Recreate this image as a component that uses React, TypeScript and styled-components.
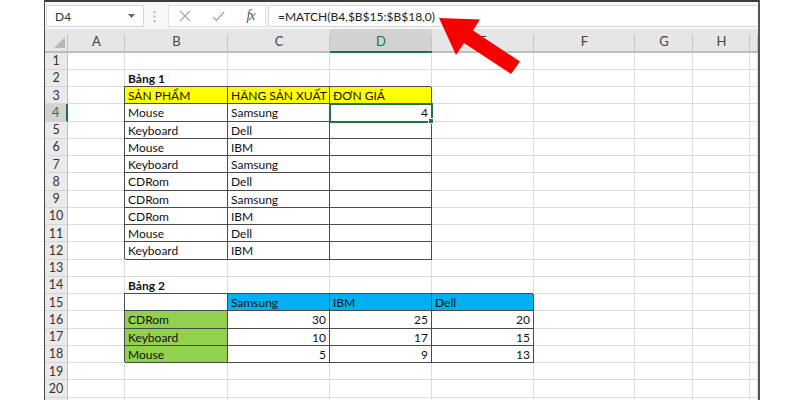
import React from 'react';
import styled, { createGlobalStyle } from 'styled-components';

const GlobalStyle = createGlobalStyle`
  html, body { margin: 0; padding: 0; background: #fff; }
  body { font-family: Lato, "Liberation Sans", sans-serif; }
`;

const GREEN = '#217346';
const BOX = '#4a4a4a';
const GRID = '#dcdcdc';

const Page = styled.div`
  position: relative;
  width: 800px;
  height: 400px;
  overflow: hidden;
  background: #fff;
`;

const Frame = styled.div`
  box-sizing: border-box;
  margin-left: 44px;
  width: 716px;
  height: 400px;
  border-top: 2px solid #3c3c3c;
  border-left: 1px solid #474747;
  border-right: 2px solid #555;
  overflow: hidden;
  display: flex;
  flex-direction: column;
  background: #fff;
`;

const FormulaBar = styled.div`
  box-sizing: border-box;
  display: flex;
  align-items: stretch;
  height: 27px;
  flex: none;
  padding: 3px 1px 2px 1px;
  background: #f7f7f7;
`;

const NameBox = styled.div`
  box-sizing: border-box;
  width: 98px;
  display: flex;
  align-items: center;
  justify-content: space-between;
  padding: 0 8px 0 8px;
  background: #fff;
  border: 1px solid #d6d6d6;
  font-size: 12px;
  color: #333;
`;

const Separator = styled.div`
  width: 24px;
  display: flex;
  align-items: center;
  justify-content: center;
  padding-right: 4px;
  box-sizing: border-box;
`;

const FuncBox = styled.div`
  box-sizing: border-box;
  width: 98px;
  display: flex;
  align-items: center;
  justify-content: space-around;
  background: #fff;
  border: 1px solid #e0e0e0;
`;

const Fx = styled.span`
  font-family: "Liberation Serif", serif;
  font-style: italic;
  font-size: 14px;
  color: #555;
  letter-spacing: -1px;
`;

const FormulaBox = styled.div`
  box-sizing: border-box;
  flex: 1;
  margin-left: 2px;
  display: flex;
  align-items: center;
  padding-left: 9px;
  background: #fff;
  border: 1px solid #d6d6d6;
  border-right: none;
  font-size: 12px;
  color: #222;
`;

const Sheet = styled.div`
  display: grid;
  grid-template-columns: 23px 57px 103px 102px 102px 102px 101px 58px 57px 1fr;
  grid-template-rows: 23.5px;
  grid-auto-rows: 17.25px;
`;

const Corner = styled.div`
  position: relative;
  box-sizing: border-box;
  background: #e6e6e6;
  border-bottom: 2px solid #bdbdbd;
  display: flex;
  align-items: flex-end;
  justify-content: flex-end;
  padding: 0 3px 3px 0;
  &::after {
    content: '';
    position: absolute;
    right: 0;
    top: 6px;
    bottom: 0;
    width: 1px;
    background: #c4c4c4;
  }
`;

const ColHeader = styled.div<{ $active?: boolean }>`
  position: relative;
  box-sizing: border-box;
  display: flex;
  align-items: center;
  justify-content: center;
  background: ${p => (p.$active ? '#d2d2d2' : '#e6e6e6')};
  border-bottom: 2px solid ${p => (p.$active ? GREEN : '#bdbdbd')};
  color: ${p => (p.$active ? GREEN : '#444')};
  font-size: 13px;
  padding-top: 3px;
  &::after {
    content: '';
    position: absolute;
    right: 0;
    top: 6px;
    bottom: 0;
    width: 1px;
    background: #c4c4c4;
  }
`;

const RowHeader = styled.div<{ $active?: boolean }>`
  box-sizing: border-box;
  display: flex;
  align-items: center;
  justify-content: center;
  background: ${p => (p.$active ? '#d2d2d2' : '#eaeaea')};
  border-bottom: 1px solid #d6d6d6;
  border-right: ${p => (p.$active ? `2px solid ${GREEN}` : '1px solid #bdbdbd')};
  color: ${p => (p.$active ? GREEN : '#333')};
  font-size: 12.5px;
`;

const Cell = styled.div<{ $bg?: string; $bold?: boolean; $right?: boolean; $boxed?: boolean; $active?: boolean }>`
  position: relative;
  z-index: ${p => (p.$active ? 2 : 'auto')};
  box-sizing: border-box;
  padding: 0 3px;
  background: ${p => p.$bg || '#fff'};
  border-right: 1px solid ${p => (p.$boxed ? BOX : GRID)};
  border-bottom: 1px solid ${p => (p.$boxed ? BOX : GRID)};
  box-shadow: ${p => (p.$boxed ? `-1px -1px 0 0 ${BOX}` : 'none')};
  outline: ${p => (p.$active ? `2px solid ${GREEN}` : 'none')};
  outline-offset: -1px;
  font-size: 12px;
  line-height: 17px;
  font-weight: ${p => (p.$bold ? 700 : 400)};
  text-align: ${p => (p.$right ? 'right' : 'left')};
  color: #111;
  white-space: nowrap;
  &::after {
    content: '';
    display: ${p => (p.$active ? 'block' : 'none')};
    position: absolute;
    right: -3px;
    bottom: -3px;
    width: 4px;
    height: 4px;
    background: ${GREEN};
    border: 1px solid #fff;
  }
`;

const ArrowSvg = styled.svg`
  position: absolute;
  left: 430px;
  top: 4px;
`;

type Spec = { t?: string; bold?: boolean; bg?: string; right?: boolean; boxed?: boolean };

const COLS = ['A', 'B', 'C', 'D', 'E', 'F', 'G', 'H', 'I'];
const ROWS = Array.from({ length: 20 }, (_, i) => i + 1);

const buildData = () => {
  const d: Record<string, Spec> = {};
  const set = (k: string, s: Spec) => {
    d[k] = { ...(d[k] || {}), ...s };
  };
  const box = (c1: string, r1: number, c2: string, r2: number) => {
    for (let c = COLS.indexOf(c1); c <= COLS.indexOf(c2); c++)
      for (let r = r1; r <= r2; r++) set(COLS[c] + r, { boxed: true });
  };
  set('B2', { t: 'Bảng 1', bold: true });
  set('B3', { t: 'SẢN PHẨM', bg: '#ffff00' });
  set('C3', { t: 'HÃNG SẢN XUẤT', bg: '#ffff00' });
  set('D3', { t: 'ĐƠN GIÁ', bg: '#ffff00' });
  const list: [string, string][] = [
    ['Mouse', 'Samsung'],
    ['Keyboard', 'Dell'],
    ['Mouse', 'IBM'],
    ['Keyboard', 'Samsung'],
    ['CDRom', 'Dell'],
    ['CDRom', 'Samsung'],
    ['CDRom', 'IBM'],
    ['Mouse', 'Dell'],
    ['Keyboard', 'IBM'],
  ];
  list.forEach(([p, h], i) => {
    set('B' + (4 + i), { t: p });
    set('C' + (4 + i), { t: h });
  });
  set('D4', { t: '4', right: true });
  box('B', 3, 'D', 12);

  set('B14', { t: 'Bảng 2', bold: true });
  set('C15', { t: 'Samsung', bg: '#00b0f0' });
  set('D15', { t: 'IBM', bg: '#00b0f0' });
  set('E15', { t: 'Dell', bg: '#00b0f0' });
  const t2: [string, number[]][] = [
    ['CDRom', [30, 25, 20]],
    ['Keyboard', [10, 17, 15]],
    ['Mouse', [5, 9, 13]],
  ];
  t2.forEach(([p, v], i) => {
    const r = 16 + i;
    set('B' + r, { t: p, bg: '#92d050' });
    set('C' + r, { t: String(v[0]), right: true });
    set('D' + r, { t: String(v[1]), right: true });
    set('E' + r, { t: String(v[2]), right: true });
  });
  box('B', 15, 'E', 18);
  return d;
};

const DATA = buildData();
const ACTIVE = 'D4';

const DropArrow = () => (
  <svg width="7" height="4" viewBox="0 0 7 4">
    <path d="M0 0 L7 0 L3.5 4 Z" fill="#666" />
  </svg>
);

const Dots = () => (
  <svg width="3" height="13" viewBox="0 0 3 13">
    <rect x="0.5" y="1" width="2" height="2" fill="#b4b4b4" />
    <rect x="0.5" y="5.5" width="2" height="2" fill="#b4b4b4" />
    <rect x="0.5" y="10" width="2" height="2" fill="#b4b4b4" />
  </svg>
);

const CancelIcon = () => (
  <svg width="12" height="12" viewBox="0 0 12 12">
    <path d="M1 1 L11 11 M11 1 L1 11" stroke="#a8a8a8" strokeWidth="1.2" fill="none" />
  </svg>
);

const EnterIcon = () => (
  <svg width="13" height="11" viewBox="0 0 13 11">
    <path d="M1 6 L4.5 9.5 L12 1" stroke="#a8a8a8" strokeWidth="1.2" fill="none" />
  </svg>
);

const CornerTriangle = () => (
  <svg width="11" height="11" viewBox="0 0 11 11">
    <path d="M11 0 L11 11 L0 11 Z" fill="#b8b8b8" />
  </svg>
);

const RedArrow = () => {
  const pts: [number, number][] = [
    [439, 18],
    [480, 19.5],
    [473, 30.5],
    [520, 61.5],
    [511, 74],
    [464, 43],
    [456, 55],
  ];
  const d = pts.map(([x, y]) => `${x - 430},${y - 4}`).join(' ');
  return (
    <ArrowSvg width="100" height="80" viewBox="0 0 100 80">
      <polygon points={d} fill="#f70000" />
    </ArrowSvg>
  );
};

export default function App() {
  return (
    <>
      <GlobalStyle />
      <Page>
        <Frame>
          <FormulaBar>
            <NameBox>
              <span>D4</span>
              <DropArrow />
            </NameBox>
            <Separator>
              <Dots />
            </Separator>
            <FuncBox>
              <CancelIcon />
              <EnterIcon />
              <Fx>fx</Fx>
            </FuncBox>
            <FormulaBox>=MATCH(B4,$B$15:$B$18,0)</FormulaBox>
          </FormulaBar>
          <Sheet>
            <Corner>
              <CornerTriangle />
            </Corner>
            {COLS.map(c => (
              <ColHeader key={c} $active={c === 'D'}>
                {c === 'I' ? '' : c}
              </ColHeader>
            ))}
            {ROWS.map(r => (
              <React.Fragment key={r}>
                <RowHeader $active={r === 4}>{r}</RowHeader>
                {COLS.map(c => {
                  const k = c + r;
                  const s = DATA[k] || {};
                  return (
                    <Cell
                      key={k}
                      $bg={s.bg}
                      $bold={s.bold}
                      $right={s.right}
                      $boxed={s.boxed}
                      $active={k === ACTIVE}
                    >
                      {s.t}
                    </Cell>
                  );
                })}
              </React.Fragment>
            ))}
            <RowHeader />
            {COLS.map(c => (
              <Cell key={'filler' + c} />
            ))}
          </Sheet>
        </Frame>
        <RedArrow />
      </Page>
    </>
  );
}
